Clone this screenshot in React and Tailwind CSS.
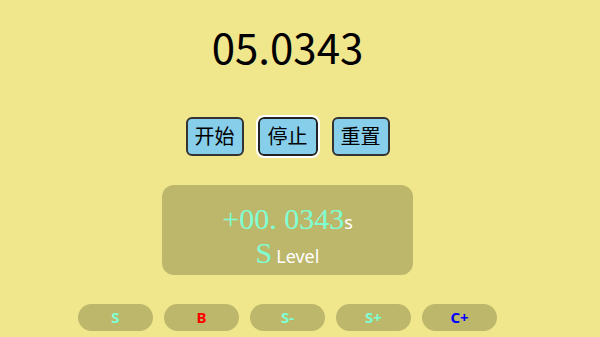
const levels = [
  { label: "S", color: "text-[#7fffd4]" },
  { label: "B", color: "text-[#ff0000]" },
  { label: "S-", color: "text-[#7fffd4]" },
  { label: "S+", color: "text-[#7fffd4]" },
  { label: "C+", color: "text-[#0000ff]" },
];

export default function App() {
  return (
    <div className="w-[600px] h-[337px] overflow-hidden bg-[#f0e68c] font-['Noto_Sans','Noto_Sans_CJK_SC',sans-serif]">
      <div className="w-[575px] flex flex-col items-center">
        {/* 计时 */}
        <div className="mt-[19px] h-[54px] font-['Noto_Sans_CJK_SC',sans-serif] text-[42px] leading-[54px] text-black">05.0343</div>

        {/* 按钮 */}
        <div className="mt-[44px] flex gap-[14px]">
          <button className="w-[58px] h-[39px] rounded-[6px] border-2 border-[#333] bg-[#87ceeb] text-[20px] text-black">开始</button>
          <button className="w-[60px] h-[39px] rounded-[6px] border-2 border-[#222] bg-[#87ceeb] text-[20px] text-black outline-2 outline-white">停止</button>
          <button className="w-[58px] h-[39px] rounded-[6px] border-2 border-[#333] bg-[#87ceeb] text-[20px] text-black">重置</button>
        </div>

        {/* 结果 */}
        <div className="mt-[29px] w-[251px] h-[90px] rounded-xl bg-[#bdb76b] flex flex-col items-center justify-center">
          <div className="flex items-baseline h-[34px]">
            <span className="font-['Liberation_Serif',serif] text-[30px] text-[#7fffd4]">+00. 0343</span>
            <span className="text-[18px] text-white">s</span>
          </div>
          <div className="flex items-baseline gap-[4px] h-[34px]">
            <span className="font-['Liberation_Serif',serif] text-[30px] text-[#7fffd4]">S</span>
            <span className="text-[18px] text-white">Level</span>
          </div>
        </div>

        {/* 历史 */}
        <div className="mt-[29px] flex gap-[11px]">
          {levels.map((lv, i) => (
            <div key={i} className={`w-[75px] h-[27px] rounded-full bg-[#bdb76b] flex items-center justify-center text-[15px] font-bold ${lv.color}`}>
              {lv.label}
            </div>
          ))}
        </div>
      </div>
    </div>
  );
}
